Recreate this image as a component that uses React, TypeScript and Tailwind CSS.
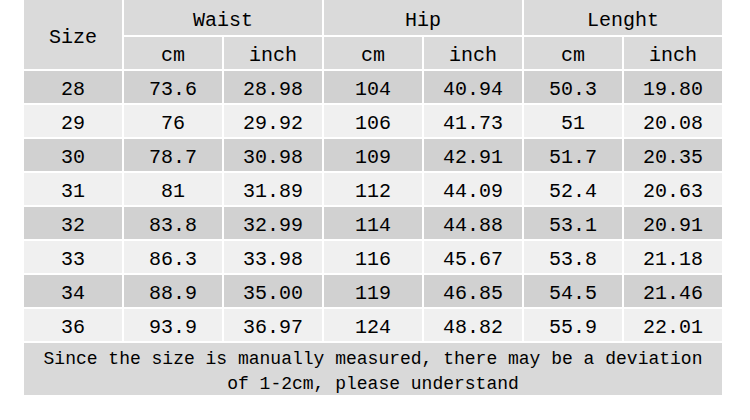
import React from 'react';

const rows: string[][] = [
  ['28', '73.6', '28.98', '104', '40.94', '50.3', '19.80'],
  ['29', '76', '29.92', '106', '41.73', '51', '20.08'],
  ['30', '78.7', '30.98', '109', '42.91', '51.7', '20.35'],
  ['31', '81', '31.89', '112', '44.09', '52.4', '20.63'],
  ['32', '83.8', '32.99', '114', '44.88', '53.1', '20.91'],
  ['33', '86.3', '33.98', '116', '45.67', '53.8', '21.18'],
  ['34', '88.9', '35.00', '119', '46.85', '54.5', '21.46'],
  ['36', '93.9', '36.97', '124', '48.82', '55.9', '22.01'],
];

const head = 'flex items-center justify-center bg-[#dadada] pt-[6px]';

const App: React.FC = () => {
  return (
    <div className="w-[750px] h-[420px] bg-white pl-[24px] text-black text-[20px] leading-none font-['Liberation_Mono','DejaVu_Sans_Mono',monospace]">
      <div className="grid grid-cols-[repeat(7,98px)] grid-rows-[35px_32px] gap-[2px] w-[698px]">
        <div className={`${head} row-span-2`}>Size</div>
        <div className={`${head} col-span-2`}>Waist</div>
        <div className={`${head} col-span-2`}>Hip</div>
        <div className={`${head} col-span-2`}>Lenght</div>
        {['cm', 'inch', 'cm', 'inch', 'cm', 'inch'].map((t, i) => (
          <div key={i} className={head}>{t}</div>
        ))}
        {rows.map((r, ri) =>
          r.map((c, ci) => (
            <div
              key={`${ri}-${ci}`}
              className={`h-[32px] pt-[6px] flex items-center justify-center ${ri % 2 === 0 ? 'bg-[#d1d1d1]' : 'bg-[#f0f0f0]'}`}
            >
              {c}
            </div>
          ))
        )}
        <div className="col-span-7 h-[52px] bg-[#d9d9d9] flex flex-col items-center justify-center text-[18px] leading-[25px] pt-[5px]">
          <span>Since the size is manually measured, there may be a deviation</span>
          <span>of 1-2cm, please understand</span>
        </div>
      </div>
    </div>
  );
};

export default App;
